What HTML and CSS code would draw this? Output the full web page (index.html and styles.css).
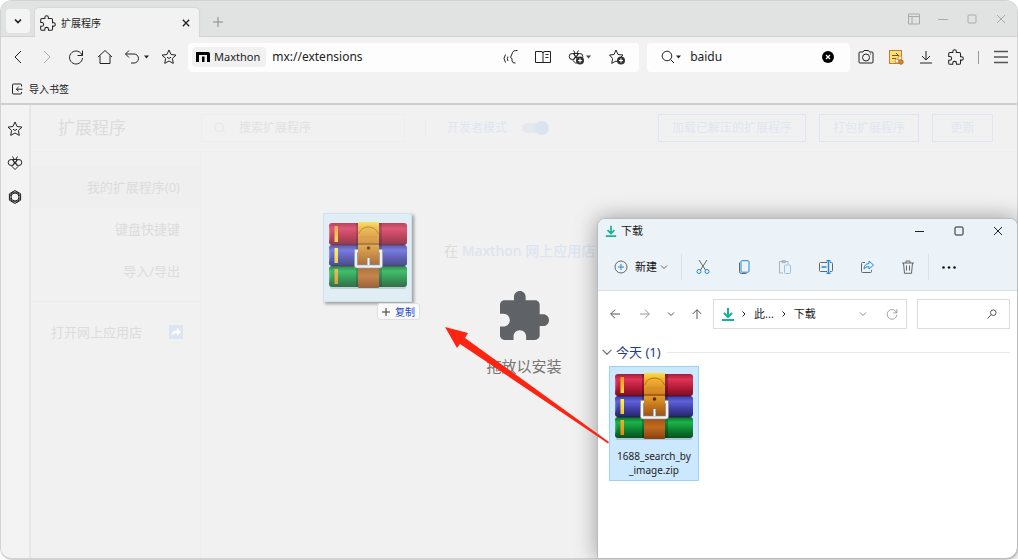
FILE: index.html
```html
<!DOCTYPE html>
<html lang="zh-CN">
<head>
<meta charset="utf-8">
<title>扩展程序</title>
<link rel="stylesheet" href="styles.css">
</head>
<body>
<svg class="defs" aria-hidden="true">
  <defs>
    <linearGradient id="red" x1="0" y1="0" x2="0" y2="1"><stop offset="0" stop-color="#a81c3a"/><stop offset=".25" stop-color="#de3456"/><stop offset=".6" stop-color="#b81c3a"/><stop offset="1" stop-color="#7c0e24"/></linearGradient>
    <linearGradient id="blue" x1="0" y1="0" x2="0" y2="1"><stop offset="0" stop-color="#3a3a9c"/><stop offset=".25" stop-color="#6060dc"/><stop offset=".6" stop-color="#4040a8"/><stop offset="1" stop-color="#25256c"/></linearGradient>
    <linearGradient id="green" x1="0" y1="0" x2="0" y2="1"><stop offset="0" stop-color="#0b6c28"/><stop offset=".25" stop-color="#1cb44a"/><stop offset=".6" stop-color="#0e8432"/><stop offset="1" stop-color="#08501e"/></linearGradient>
    <linearGradient id="belt" x1="0" y1="0" x2="0" y2="1"><stop offset="0" stop-color="#ffe040"/><stop offset=".1" stop-color="#f0b030"/><stop offset=".33" stop-color="#d08020"/><stop offset=".36" stop-color="#e09a2c"/><stop offset=".66" stop-color="#a04c0c"/><stop offset=".82" stop-color="#c06c20"/><stop offset="1" stop-color="#8a3e0c"/></linearGradient>
    <linearGradient id="gold" x1="0" y1="0" x2="0" y2="1"><stop offset="0" stop-color="#e89a20"/><stop offset=".4" stop-color="#fff04a"/><stop offset="1" stop-color="#d88a18"/></linearGradient>
  </defs>
  <symbol id="archive" viewBox="0 0 78 67">
    <rect x="1" y="64" width="76" height="3" rx="1.500" fill="#000" opacity=".15"/>
    <rect y="1" width="78" height="22" rx="3" fill="url(#red)"/>
    <rect y="23" width="78" height="21" rx="3" fill="url(#blue)"/>
    <rect y="44" width="78" height="21" rx="3" fill="url(#green)"/>
    <path d="M2 23h74M2 44h74" stroke="#1c1030" stroke-width="1" opacity=".6"/>
    <path d="M0 4q3 8 0 16zM0 26q3 8 0 15zM0 47q3 8 0 15z" fill="#fff" opacity=".25"/>
    <path d="M5.500 4h3.500v16H5.500zM5.500 26h3.500v15H5.500zM5.500 47h3.500v15H5.500z" fill="url(#gold)"/>
    <path d="M27 1h2v64h-2zM50 1h3v64h-3z" fill="#000" opacity=".25"/>
    <rect x="29" width="21" height="66" rx="1" fill="url(#belt)"/>
    <path d="M29.500 12q3-7 10-7t10 7" fill="none" stroke="#b8700f" stroke-width="1"/>
    <path d="M29 22h21" stroke="#8a4a0a" stroke-width="1.200"/>
    <path d="M31 15h17" stroke="#b8700f" stroke-width=".7" opacity=".5"/>
    <circle cx="39.500" cy="26" r="1.800" fill="#5e2805"/>
    <path d="M29 29h-2v14.500q0 1 1 1h23q1 0 1-1V29h-2" fill="none" stroke="#777b84" stroke-width="4"/>
    <path d="M29 29h-2v14.500q0 1 1 1h23q1 0 1-1V29h-2" fill="none" stroke="#f2f2f2" stroke-width="2.400"/>
    <path d="M39.500 36v7" stroke="#6c6c74" stroke-width="3.500"/><path d="M39.500 36v7" stroke="#fff" stroke-width="2"/>
  </symbol>
  <symbol id="puzzle" viewBox="1 0 23 23"><path d="M20.500 11H19V7c0-1.100-.9-2-2-2h-4V3.500C13 2.120 11.880 1 10.500 1S8 2.120 8 3.500V5H4c-1.100 0-1.990.9-1.990 2v3.800H3.500c1.490 0 2.700 1.210 2.700 2.700s-1.210 2.700-2.700 2.700H2V20c0 1.100.9 2 2 2h3.800v-1.500c0-1.490 1.210-2.700 2.700-2.700 1.490 0 2.700 1.210 2.700 2.700V22H17c1.100 0 2-.9 2-2v-4h1.500c1.380 0 2.500-1.120 2.500-2.500S21.880 11 20.500 11z"/></symbol>
  <symbol id="star" viewBox="0 0 16 16"><path d="M8 1l2.100 4.500 4.900.6-3.600 3.400.9 4.900L8 12l-4.300 2.400.9-4.900L1 6.100l4.900-.6z"/><path d="M6 8.200q2 2.600 4 0"/></symbol>
  <symbol id="bee" viewBox="0 0 16 16"><path d="M5.500 1.500l1.500 2.500M10.500 1.500L9 4M5.500 4.500h5L8 8z"/><circle cx="4.200" cy="7.500" r="3"/><circle cx="11.800" cy="7.500" r="3"/><path d="M8 8l3 3.500-3 3-3-3z"/></symbol>
  <symbol id="chev" viewBox="0 0 8 8"><path d="M1 2.500l3 3 3-3"/></symbol>
  <symbol id="caret" viewBox="0 0 5 4"><path d="M0 .5h5L2.500 3.500z"/></symbol>
  <symbol id="close" viewBox="0 0 10 10"><path d="M1 1l8 8M9 1L1 9"/></symbol>
  <symbol id="square" viewBox="0 0 10 10"><rect x="1" y="1" width="8" height="8" rx="1"/></symbol>
  <symbol id="down" viewBox="0 0 14 14"><path d="M7 1v9M3 6l4 4 4-4M1 13h12"/></symbol>
  <symbol id="reload" viewBox="0 0 16 16"><path d="M14.200 6.500A6.500 6.500 0 1 0 14.500 9M14.500 1.500v5h-5"/></symbol>
  <symbol id="find" viewBox="0 0 14 14"><circle cx="6" cy="6" r="4.800"/><path d="M9.500 9.500L13 13"/></symbol>
</svg>

<div class="browser">
  <header class="tabstrip">
    <button class="tab-list" aria-label="标签列表"><svg class="i8 bold"><use href="#chev"/></svg></button>
    <div class="tab">
      <svg class="i16"><use href="#puzzle" stroke-width="1.500"/></svg>
      <span class="tab-title">扩展程序</span>
      <button class="tab-close" aria-label="关闭标签"><svg class="i8 bold"><use href="#close"/></svg></button>
    </div>
    <button class="new-tab" aria-label="新建标签"><svg class="i10" viewBox="0 0 10 10"><path d="M5 0v10M0 5h10"/></svg></button>
    <div class="controls">
      <button aria-label="布局"><svg class="i12" viewBox="0 0 12 12"><path d="M.5 1h11v10H.5zM.5 3.500h11M4 3.500V11"/></svg></button>
      <button aria-label="最小化"><svg class="i10" viewBox="0 0 10 10"><path d="M0 5.500h10"/></svg></button>
      <button aria-label="最大化"><svg class="i10"><use href="#square"/></svg></button>
      <button aria-label="关闭"><svg class="i10"><use href="#close"/></svg></button>
    </div>
  </header>

  <div class="toolbar">
    <button class="tool" aria-label="后退"><svg class="i16" viewBox="0 0 16 16"><path d="M11 2L5 8l6 6"/></svg></button>
    <button class="tool dim" aria-label="前进"><svg class="i16" viewBox="0 0 16 16"><path d="M5 2l6 6-6 6"/></svg></button>
    <button class="tool" aria-label="刷新"><svg class="i16"><use href="#reload"/></svg></button>
    <button class="tool" aria-label="主页"><svg class="i16" viewBox="0 0 16 16"><path d="M1 8l7-6.500L15 8M3 6.500v8h10v-8"/></svg></button>
    <button class="tool undo" aria-label="撤销"><svg class="i16" viewBox="0 0 16 16"><path d="M5 1.500L1.500 5 5 8.500M1.500 5h8.500a4.500 4.500 0 0 1 0 9H7"/></svg><svg class="caret"><use href="#caret"/></svg></button>
    <button class="tool" aria-label="收藏"><svg class="i16"><use href="#star"/></svg></button>

    <div class="address">
      <span class="chip"><svg class="brand" viewBox="0 0 14 10"><path d="M0 0h12q2 0 2 2v8h-3V3H3v7H0z"/><path d="M6 4.500h2.500V10H6z"/></svg>Maxthon</span>
      <input class="field" type="text" aria-label="地址" value="mx://extensions">
      <button class="tool" aria-label="朗读"><svg class="i16" viewBox="0 0 16 16"><path d="M15.500 1.500q-5-.5-5.500 3.500L8.500 8.500l1.500 1V12q.5 2.500 3.500 2M6 7.500q-1.500 2 0 4.500M3.500 5.500q-3 4 0 8"/></svg></button>
      <button class="tool" aria-label="阅读模式"><svg class="i16" viewBox="0 0 16 16"><path d="M8 3v11M.5 2.500H6Q8 2.500 8 4q0-1.500 2-1.500h5.500v11h-15zM10.500 5.500h3M10.500 8.500h3"/></svg></button>
      <button class="tool wide" aria-label="添加笔记"><svg class="i16" viewBox="0 0 16 16"><use href="#bee" width="16" height="16"/><circle class="ink" cx="12" cy="11.500" r="4"/><path class="plus" d="M12 9.500v4M10 11.500h4"/></svg><svg class="caret"><use href="#caret"/></svg></button>
      <button class="tool" aria-label="添加收藏"><svg class="i16" viewBox="0 0 16 16"><path d="M7 1l2 4.500 5 .5-3.500 3.500 1 5L7 12l-4.300 2.400.9-4.900L.5 6 5 5.500z"/><circle class="ink" cx="12" cy="11.500" r="4"/><path class="plus" d="M12 9.500v4M10 11.500h4"/></svg></button>
    </div>
    <div class="search">
      <button class="tool engine" aria-label="搜索引擎"><svg class="i14"><use href="#find"/></svg><svg class="caret"><use href="#caret"/></svg></button>
      <input class="field" type="text" aria-label="搜索" value="baidu">
      <button class="tool" aria-label="清除"><svg class="i12" viewBox="0 0 12 12"><circle class="black" cx="6" cy="6" r="6"/><path class="plus" d="M4 4l4 4M8 4L4 8"/></svg></button>
    </div>

    <button class="tool side" aria-label="截图"><svg class="i16" viewBox="0 0 16 16"><path d="M2 3h3l1-1.500h4.500l1 1.500H14q1 0 1 1v9q0 1-1 1H2q-1 0-1-1V4q0-1 1-1z"/><circle cx="8" cy="8.500" r="3.500"/><path d="M12 5h1"/></svg></button>
    <button class="tool side" aria-label="笔记"><svg class="i16" viewBox="0 0 16 16"><rect x="1.500" y="1.500" width="12" height="13" fill="#ffdf78" stroke="#c77b30"/><path d="M4 6.500h7M4 9.500h4M8 4l3 3" stroke="#8a5320"/><circle cx="12" cy="9" r="2" fill="#fff" stroke="#d98a3a"/><circle cx="9" cy="12" r="2" fill="#fff" stroke="#d98a3a"/><circle cx="13" cy="13" r="2.200" fill="#e68a20" stroke="#b5651b"/></svg></button>
    <button class="tool side" aria-label="下载"><svg class="i14"><use href="#down"/></svg></button>
    <button class="tool side" aria-label="扩展"><svg class="i16"><use href="#puzzle" stroke-width="1.500"/></svg></button>
    <span class="divider"></span>
    <button class="tool" aria-label="菜单"><svg class="i14 thick" viewBox="0 0 14 14"><path d="M0 1.500h14M0 7h14M0 12.500h14"/></svg></button>
  </div>

  <div class="bookmarks">
    <button class="import"><svg class="i12" viewBox="0 0 12 12"><path d="M10.500 3.500V2q0-1-1-1h-7q-1 0-1 1v8q0 1 1 1h7q1 0 1-1V9M11.500 6.200H5.500M7.500 4L5.300 6.200 7.500 8.400"/></svg>导入书签</button>
  </div>

  <div class="body">
    <nav class="rail" aria-label="侧边栏">
      <button aria-label="收藏"><svg class="i16"><use href="#star"/></svg></button>
      <button aria-label="笔记"><svg class="i16"><use href="#bee"/></svg></button>
      <button aria-label="密码"><svg class="i16" viewBox="0 0 16 16"><circle cx="8" cy="8" r="4"/><path d="M8 1.500L13.600 4.800v6.400L8 14.500 2.400 11.200V4.800zM5.200 3.200h5.600L13.600 8l-2.800 4.800H5.200L2.400 8z" stroke-linejoin="round"/></svg></button>
    </nav>

    <div class="page">
      <div class="page-head">
        <h1>扩展程序</h1>
        <label class="ext-search"><svg class="i12"><use href="#find"/></svg><input type="search" aria-label="搜索扩展程序" placeholder="搜索扩展程序"></label>
        <label class="dev">开发者模式<input type="checkbox" checked></label>
        <div class="actions">
          <button>加载已解压的扩展程序</button>
          <button>打包扩展程序</button>
          <button>更新</button>
        </div>
      </div>
      <div class="page-body">
        <nav class="menu">
          <a class="current" href="#mine">我的扩展程序(0)</a>
          <a href="#keys">键盘快捷键</a>
          <a href="#io">导入/导出</a>
          <a class="store" href="#store">打开网上应用店<svg class="i14" viewBox="0 0 14 14"><rect width="14" height="14" rx="1"/><path d="M8 3l4 4-4 3.500V8.500Q4 8 2.500 10.500 3 5.500 8 5.500z"/></svg></a>
        </nav>
        <main class="empty"><p>在 <a href="#store">Maxthon 网上应用店</a></p></main>
      </div>
      <div class="drop">
        <svg class="drop-icon" viewBox="2 1 21 21"><use href="#puzzle" x="1" width="23" height="23"/></svg>
        <p>拖放以安装</p>
      </div>
    </div>
  </div>
</div>

<section class="explorer" aria-label="下载">
  <div class="chrome">
    <div class="titlebar">
      <svg class="i12 teal"><use href="#down"/></svg><span>下载</span>
      <div class="win">
        <button aria-label="最小化"><svg class="i10" viewBox="0 0 10 10"><path d="M0 5.500h9"/></svg></button>
        <button aria-label="最大化"><svg class="i10"><use href="#square"/></svg></button>
        <button aria-label="关闭"><svg class="i10"><use href="#close"/></svg></button>
      </div>
    </div>
    <div class="commands">
      <button class="create"><svg class="i14" viewBox="0 0 14 14"><circle cx="7" cy="7" r="6"/><path class="accent" d="M7 4v6M4 7h6"/></svg>新建<svg class="i8 grey"><use href="#chev"/></svg></button>
      <button class="cmd" aria-label="剪切"><svg class="i14" viewBox="0 0 14 14"><path d="M3 0l6.500 10M11 0L4.500 10"/><circle class="accent" cx="3" cy="11.500" r="2"/><circle class="accent" cx="11" cy="11.500" r="2"/></svg></button>
      <button class="cmd" aria-label="复制"><svg class="i14" viewBox="0 0 14 14"><path d="M2.500 2.500v9q0 2 2 2h5"/><rect class="accent" x="4" y=".7" width="8" height="11.500" rx="1"/></svg></button>
      <button class="cmd faded" aria-label="粘贴"><svg class="i14" viewBox="0 0 14 14"><path d="M5 13H1.500V1.500H10V4M4 .7h3.500v2H4z"/><rect class="accent" x="6.500" y="5" width="6" height="8.500" rx="1"/></svg></button>
      <button class="cmd" aria-label="重命名"><svg class="i14" viewBox="0 0 14 14"><path d="M8 2.500H1.500q-1 0-1 1v7q0 1 1 1H8M11 2.500h1.500q1 0 1 1v7q0 1-1 1H11"/><path class="accent" d="M9.500 .7v12.600M7.500.7h4M7.500 13.300h4M2.500 7h5" stroke-width="1.500"/></svg></button>
      <button class="cmd" aria-label="共享"><svg class="i14" viewBox="0 0 14 14"><path d="M5 2.500H2.500q-1 0-1 1v8q0 1 1 1h8q1 0 1-1V10"/><path class="accent" d="M9 1l4.500 4L9 9V6.500Q5.500 6.500 4 9q0-5 5-5.500z"/></svg></button>
      <button class="cmd" aria-label="删除"><svg class="i14" viewBox="0 0 14 14"><path d="M1 3h12M5 3V1h4v2M2.500 3l1 10.300h7L11.500 3M5.500 5.500v5M8.500 5.500v5"/></svg></button>
      <button class="cmd more" aria-label="更多"><svg class="i14" viewBox="0 0 14 14"><circle cx="1.500" cy="7.500" r="1.300"/><circle cx="7" cy="7.500" r="1.300"/><circle cx="12.500" cy="7.500" r="1.300"/></svg></button>
    </div>
  </div>
  <div class="nav">
    <button aria-label="后退"><svg class="i10" viewBox="0 0 10 10"><path d="M10 5H.7M5 .7L.7 5 5 9.300"/></svg></button>
    <button class="lite" aria-label="前进"><svg class="i10" viewBox="0 0 10 10"><path d="M0 5h9.300M5 .7L9.300 5 5 9.300"/></svg></button>
    <button class="thin" aria-label="最近"><svg class="i8"><use href="#chev"/></svg></button>
    <button aria-label="向上"><svg class="i10" viewBox="0 0 10 10"><path d="M5 10V.7M.7 5L5 .7 9.300 5"/></svg></button>
    <div class="path">
      <svg class="i14 teal"><use href="#down"/></svg>
      <svg class="i8 crumb" viewBox="0 0 8 8"><path d="M2.500 1.500L5 4 2.500 6.500"/></svg><span>此...</span>
      <svg class="i8 crumb" viewBox="0 0 8 8"><path d="M2.500 1.500L5 4 2.500 6.500"/></svg><span>下载</span>
      <button class="push" aria-label="展开"><svg class="i8"><use href="#chev"/></svg></button>
      <button aria-label="刷新"><svg class="i12"><use href="#reload"/></svg></button>
    </div>
    <label class="find"><input type="text" aria-label="搜索下载"><svg class="i10" viewBox="0 0 10 10"><circle cx="6.300" cy="3.700" r="2.800"/><path d="M4.300 5.700L.5 9.500"/></svg></label>
  </div>
  <h2 class="group"><svg class="i10" viewBox="0 0 8 8"><path d="M.5 2.300L4 5.800l3.500-3.500"/></svg>今天 (1)</h2>
  <button class="file"><svg class="archive"><use href="#archive"/></svg><span>1688_search_by<br>_image.zip</span></button>
</section>

<div class="ghost"><svg class="archive"><use href="#archive"/></svg></div>
<div class="hint"><svg class="i8" viewBox="0 0 8 8"><path d="M4 0v8M0 4h8"/></svg>复制</div>
<svg class="arrow" viewBox="0 0 164 117" aria-hidden="true"><path d="M0 0l23 6-3 5 144 104-1 1.500L15 17l-3 4z"/></svg>
</body>
</html>
```

FILE: styles.css
```css
* { box-sizing: border-box; }
body {
  margin: 0;
  position: relative;
  min-height: 100vh;
  background: #fff;
  color: #222;
  font: 12px/16px "Noto Sans", "Noto Sans CJK SC", sans-serif;
}
button, input { font: inherit; color: inherit; }
button { display: flex; align-items: center; justify-content: center; padding: 0; border: 0; background: none; }
input { min-width: 0; border: 0; outline: 0; background: none; padding: 0; }
p, h1, h2 { margin: 0; font-weight: 400; }
a { color: inherit; text-decoration: none; }
svg { flex: none; fill: none; stroke: currentColor; }
.defs { position: absolute; width: 0; height: 0; }
.i8 { width: 8px; height: 8px; }
.i10 { width: 10px; height: 10px; }
.i12 { width: 12px; height: 12px; }
.i14 { width: 14px; height: 14px; }
.i16 { width: 16px; height: 16px; }
.bold { stroke-width: 1.7; }
.caret { width: 5px; height: 4px; fill: currentColor; stroke: none; }
.ink { fill: #333; stroke: none; }
.black { fill: #000; stroke: none; }
.plus { stroke: #fff; stroke-width: 1.2; }
.teal { color: #18b394; stroke-width: 2; }
.grey { color: #888; }
.accent { stroke: #2488dc; }

.browser {
  display: flex;
  flex-direction: column;
  min-height: 100vh;
  border: 1px solid #d2d2d2;
  border-bottom-width: 2px;
  border-radius: 12px;
  overflow: hidden;
  background: #f2f2f2;
}
.tabstrip { display: flex; height: 36px; padding: 0 2px 0 5px; background: #e1e3e2; border-bottom: 1px solid #d2d3d3; }
.tab-list { width: 24px; height: 24px; margin: 8px 5px 0 0; border-radius: 4px; background: #f4f4f4; }
.tab { display: flex; align-items: center; width: 164px; height: 29px; margin-top: 7px; padding: 0 5px; gap: 5px; border-radius: 4px 4px 0 0; background: #f2f2f2; box-shadow: 0 0 2px #bbb; clip-path: inset(-2px -2px 0); }
.tab-title { flex: 1; font-size: 10px; }
.tab-close { width: 16px; height: 20px; }
.new-tab { width: 38px; height: 28px; margin-top: 7px; color: #888; }
.controls { display: flex; margin-left: auto; color: #aaa; }
.controls button { width: 29px; }

.toolbar { display: flex; align-items: center; height: 40px; padding: 0 2px; }
.tool { flex: none; width: 29px; height: 28px; }
.tool.wide { width: 37px; gap: 2px; }
.tool.undo { width: 35px; gap: 4px; }
.tool.engine { width: 32px; gap: 1px; }
.tool.side { width: 30px; }
.dim { color: #aaa; }
.thick { color: #555; stroke-width: 1.3; }
.address, .search { display: flex; align-items: center; height: 29px; border-radius: 4px; background: #fdfdfd; min-width: 0; }
.address { flex: 47 1 0; margin: 0 8px 0 5px; padding: 0 8px 0 4px; gap: 4px; }
.address .caret { color: #444; }
.search { flex: 20 1 0; padding: 0 8px; gap: 2px; margin-right: 1px; }
.chip { display: flex; align-items: center; gap: 4px; height: 20px; padding: 0 6px 0 4px; border-radius: 4px; background: #f1f1f1; font-size: 11px; }
.brand { width: 14px; height: 10px; fill: #000; stroke: none; }
.field { flex: 1; width: 0; margin-left: 2px; font-size: 12px; }
.search .field { margin-left: 1px; }
.divider { width: 1px; height: 13px; margin: 0 7px; background: #999; }

.bookmarks { display: flex; height: 28px; padding: 0 10px; border-bottom: 2px solid #cfcfcf; }
.import { gap: 6px; height: 24px; font-size: 10px; }

.body { display: flex; flex: 1; }
.rail { display: flex; flex-direction: column; width: 30px; padding-top: 7px; border-right: 2px solid #e6e6e6; background: #f3f3f3; }
.rail button { height: 34px; }
.page { position: relative; display: flex; flex: 1; flex-direction: column; background: #f1f1f1; color: #dcdcdc; }
.page-head { display: flex; align-items: center; height: 47px; padding: 0 24px 0 0; border-bottom: 1px solid #eee; }
h1 { width: 170px; padding-left: 27px; font-size: 17px; }
.ext-search { display: flex; align-items: center; width: 204px; height: 28px; padding: 0 12px; gap: 13px; border: 1px solid #ededed; color: #e4e4e4; }
.ext-search input { flex: 1; width: 0; }
.ext-search input::placeholder { color: #e2e2e2; opacity: 1; }
.dev { display: flex; align-items: center; gap: 15px; margin-left: 20px; padding-left: 21px; border-left: 1px solid #ececec; color: #dfe6f1; }
.dev input { position: relative; appearance: none; width: 26px; height: 10px; margin: 0; border-radius: 5px; background: #e3e8f1; }
.dev input::after { content: ""; position: absolute; top: -2px; right: -1px; width: 14px; height: 14px; border-radius: 50%; background: #dae4f0; }
.actions { display: flex; gap: 13px; margin-left: auto; color: #e0e6f1; }
.actions button { min-width: 61px; height: 28px; padding: 0 13px; border: 1px solid #dfe6f2; }
.page-body { display: flex; flex: 1; }
.menu { width: 170px; padding-top: 14px; border-right: 1px solid #eee; font-size: 13px; }
.menu a { display: flex; align-items: center; justify-content: flex-end; height: 42px; padding-right: 20px; }
.menu .current { background: #efefef; }
.menu .store { height: 60px; margin-top: 9px; justify-content: space-between; padding: 0 17px 0 20px; border-top: 1px solid #ebebeb; }
.store svg { fill: #dce5f1; stroke: none; }
.store path { fill: #fff; }
.empty { padding: 89px 0 0 243px; font-size: 14px; line-height: 20px; }
.empty a { color: #dce4f1; font-weight: 500; }
.drop { position: absolute; inset: 0; display: flex; flex-direction: column; align-items: center; justify-content: center; gap: 16px; padding-top: 3px; color: #757575; font-size: 15px; line-height: 20px; }
.drop-icon { width: 49px; height: 49px; fill: #5f6368; stroke: none; }

.explorer { position: absolute; top: 218px; right: 0; bottom: 1px; width: 421px; border: 1px solid #bbb; border-radius: 8px 8px 12px 0; overflow: hidden; background: #fff; box-shadow: 0 0 22px rgba(0, 0, 0, .36); clip-path: inset(-40px 0 0 -40px); font-size: 11px; }
.chrome { background: #ebf3f8; border-bottom: 1px solid #d9dfe3; }
.titlebar { display: flex; align-items: center; height: 24px; padding-left: 7px; gap: 4px; }
.win { display: flex; margin-left: auto; }
.win button { width: 39px; height: 24px; }
.commands { display: flex; align-items: center; height: 47px; }
.create { justify-content: flex-start; width: 84px; height: 26px; gap: 7px; padding-left: 16px; border-right: 1px solid #dbe3e8; }
.create .grey { margin-left: -4px; }
.commands svg { color: #666; }
.commands .create { color: #111; }
.cmd { width: 41px; height: 26px; }
.faded { opacity: .45; }
.more { border-left: 1px solid #dbe3e8; }
.commands .more svg { fill: #111; stroke: none; }
.nav { display: flex; align-items: center; height: 45px; padding: 0 7px 0 2px; color: #555; }
.nav button { width: 30px; height: 28px; }
.nav .thin { width: 22px; }
.nav .lite { color: #999; }
.nav .path { display: flex; align-items: center; flex: 1; height: 30px; margin-left: 1px; padding-left: 7px; border: 1px solid #dcdcdc; color: #222; }
.crumb { margin: 0 6px 0 5px; }
.crumb ~ .crumb { margin-left: 6px; }
.path button { width: 29px; color: #888; }
.path .push { margin-left: auto; }
.find { display: flex; align-items: center; width: 93px; height: 30px; margin-left: 10px; padding: 0 12px; border: 1px solid #dcdcdc; }
.find input { flex: 1; width: 0; }
.group { display: flex; align-items: center; gap: 4px; height: 32px; padding: 0 7px 0 4px; color: #1e3c90; font-size: 13px; }
.group svg { color: #777; }
.group::after { content: ""; flex: 1; height: 1px; margin-left: 2px; background: #e8e8e8; }
.file { flex-direction: column; gap: 9px; width: 90px; height: 115px; padding-top: 3px; margin-left: 11px; margin-top: -2px; border: 1px solid #99d1ff; background: #cce8ff; font-size: 10px; line-height: 14px; }
.archive { width: 78px; height: 67px; stroke: none; }

.ghost { position: absolute; left: 323px; top: 213px; display: flex; align-items: center; justify-content: center; width: 89px; height: 89px; padding-bottom: 5px; border: 1px solid #cfe3f0; background: #e0edf5; box-shadow: 2px 2px 3px rgba(0, 0, 0, .35); }
.ghost svg { opacity: .8; }
.hint { position: absolute; left: 377px; top: 303px; display: flex; align-items: center; gap: 5px; height: 17px; padding: 0 4px; border: 1px solid #e0e0e0; border-radius: 3px; background: #fafafa; color: #2045c8; font-size: 10px; }
.hint svg { color: #333; }
.arrow { position: absolute; left: 445px; top: 327px; width: 164px; height: 117px; fill: #fe2412; stroke: none; }
```
